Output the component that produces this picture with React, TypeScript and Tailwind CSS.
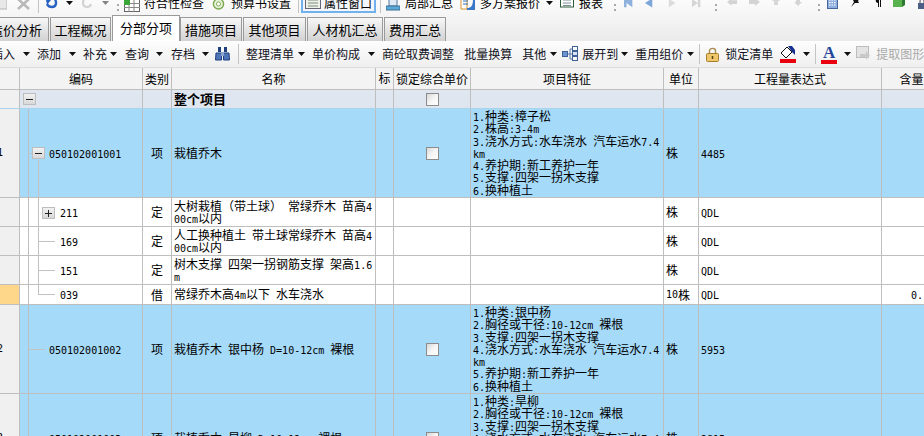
import React from "react";

const cjk = "font-['Noto_Sans_CJK_SC','Liberation_Sans',sans-serif]";
const mono = "font-['DejaVu_Sans_Mono','Liberation_Mono',monospace] text-[10px]";

function Mixed({ t }: { t: string }) {
  const parts = t.match(/[\x00-\x7f]+|[^\x00-\x7f]+/g) || [];
  return (
    <>
      {parts.map((p, i) =>
        /^[\x00-\x7f]/.test(p) ? (
          <span key={i} className={`${mono} whitespace-pre`}>{p}</span>
        ) : (
          <span key={i}>{p}</span>
        )
      )}
    </>
  );
}

function Lines({ lines, cls }: { lines: string[]; cls: string }) {
  return (
    <div className={cls}>
      {lines.map((l, i) => (
        <div key={i} className="whitespace-pre h-[12.3px]"><Mixed t={l} /></div>
      ))}
    </div>
  );
}

const Arrow = ({ cls }: { cls: string }) => (
  <svg viewBox="0 0 7 4" className={`w-[7px] h-[4px] shrink-0 ${cls}`}><path d="M0 0H7L3.5 4Z" fill="#111" /></svg>
);
const Grip = ({ cls }: { cls: string }) => (
  <div className={`w-[2px] h-[14px] shrink-0 flex flex-col justify-center gap-[3px] ${cls}`}>
    <div className="w-[2px] h-[2px] bg-[#a8a8a8]" />
    <div className="w-[2px] h-[2px] bg-[#a8a8a8]" />
  </div>
);
const Sep = ({ cls }: { cls: string }) => <div className={`w-px h-[20px] shrink-0 bg-[#c4c4c4] ${cls}`} />;
const Txt = ({ cls, children }: { cls: string; children: React.ReactNode }) => (
  <span className={`shrink-0 whitespace-nowrap ${cls}`}>{children}</span>
);

function NavIcon({ cls, d, fill }: { cls: string; d: string; fill: string }) {
  return (
    <svg viewBox="0 -7 12 20" className={`h-[20px] shrink-0 ${cls}`}><path d={d} fill={fill} /></svg>
  );
}

function TopBar() {
  return (
    <div className="h-[13px] overflow-hidden">
      <div className={`flex items-center h-[20px] -mt-[7px] text-[12px] text-black ${cjk}`}>
        <svg viewBox="0 -7 10 20" className="w-[10px] h-[20px] -ml-[3px] shrink-0"><rect x="1" y="-5" width="9" height="14" fill="#e8e8e8" stroke="#b5b5b5" /></svg>
        <svg viewBox="0 -7 13 20" className="w-[13px] h-[20px] ml-[10px] shrink-0"><path d="M1 -1L12 9M12 -1L1 9" stroke="#b9b9b9" strokeWidth="2.6" /></svg>
        <Sep cls="ml-[8px]" />
        <svg viewBox="0 -7 12 20" className="w-[12px] h-[20px] ml-[7px] shrink-0"><path d="M9 -1C11 3 10 7 6 7 3.500 7 2 6 1 4" stroke="#2a62c4" strokeWidth="2.4" fill="none" /><path d="M0 0H5L1 5Z" fill="#2a62c4" /></svg>
        <Arrow cls="ml-[8px]" />
        <svg viewBox="0 -7 10 20" className="w-[10px] h-[20px] ml-[9px] shrink-0"><path d="M2 -1C0 3 1 7 5 7 7 7 8.500 6 9 4" stroke="#d2d2d2" strokeWidth="2.2" fill="none" /></svg>
        <Arrow cls="ml-[10px] opacity-50" />
        <Grip cls="ml-[8px] mt-[8px]" />
        <svg viewBox="0 -7 16 20" className="w-[16px] h-[20px] ml-[5px] shrink-0">
          <rect x="0.500" y="-0.500" width="15" height="12" fill="#fff" stroke="#666" />
          <path d="M0 3.500H16M0 7.500H16M5 0V12M10 0V12" stroke="#888" />
          <rect x="0" y="-1" width="6" height="6" fill="#3aa63a" />
        </svg>
        <Txt cls="ml-[4px]">符合性检查</Txt>
        <svg viewBox="0 -7 14 20" className="w-[13px] h-[20px] ml-[8px] shrink-0">
          <circle cx="7" cy="4" r="5.500" fill="#e6f2d8" stroke="#7aa84e" strokeWidth="1.500" />
          <circle cx="7" cy="4" r="2.200" fill="#fff" stroke="#7aa84e" />
        </svg>
        <Txt cls="ml-[6px]">预算书设置</Txt>
        <Sep cls="ml-[7px]" />
        <div className="ml-[2px] w-[75px] h-[20px] shrink-0 flex items-center border-2 border-[#72b2ec] bg-[#f3f6fb] pl-[2px]">
          <svg viewBox="0 -7 16 20" className="w-[16px] h-[20px] shrink-0">
            <rect x="0.500" y="-2.500" width="15" height="11" fill="#eef1e8" stroke="#667" />
            <path d="M3 0H13M3 3H13M3 6H13" stroke="#7a8a80" />
          </svg>
          <Txt cls="ml-[3px]">属性窗口</Txt>
        </div>
        <Sep cls="ml-[4px]" />
        <svg viewBox="0 -7 14 20" className="w-[14px] h-[20px] ml-[5px] shrink-0">
          <rect x="3" y="-2" width="8" height="8" fill="#dfe9f5" stroke="#55789f" />
          <path d="M0 6H14V10H0Z" fill="#5aa9d6" stroke="#3c6f96" />
        </svg>
        <Txt cls="ml-[5px]">局部汇总</Txt>
        <svg viewBox="0 -7 8 20" className="w-[8px] h-[20px] ml-[7px] shrink-0">
          <path d="M1 -2H7V9H1Z" fill="#fff" stroke="#d9912b" />
          <path d="M3 1H8M3 4H8" stroke="#2d6fbe" />
        </svg>
        <svg viewBox="0 -7 8 20" className="w-[8px] h-[20px] -ml-px shrink-0"><path d="M0 8C5 8 6 5 6 -2H8V10H0Z" fill="#3a78c8" /></svg>
        <Txt cls="ml-[5px]">多方案报价</Txt>
        <Arrow cls="ml-[6px]" />
        <svg viewBox="0 -7 14 20" className="w-[14px] h-[20px] ml-[7px] shrink-0">
          <rect x="0.500" y="-2" width="13" height="9" fill="#fff" stroke="#2e5c3a" />
          <path d="M3 0H11M3 3H11M3 5.500H11" stroke="#7d8e96" />
        </svg>
        <Txt cls="ml-[5px]">报表</Txt>
        <Grip cls="ml-[11px] mt-[8px]" />
        <NavIcon cls="w-[10px] ml-[8px]" d="M0 -2H3V8H0ZM3 -2L10 -2 10 8 3 3Z" fill="#8fb2dd" />
        <NavIcon cls="w-[11px] ml-[10px]" d="M9 -2V8L1 3Z" fill="#7ea7d9" />
        <NavIcon cls="w-[10px] ml-[13px]" d="M1 -2V8L9 3Z" fill="#dcdcdc" />
        <NavIcon cls="w-[10px] ml-[14px]" d="M0 -2V8L7 3ZM7 -2H10V8H7Z" fill="#d6d6d6" />
        <Grip cls="ml-[13px] mt-[8px]" />
        <NavIcon cls="w-[11px] ml-[10px]" d="M0 2L5 -2V0H11V4H5V6Z" fill="#d4d4d4" />
        <NavIcon cls="w-[12px] ml-[10px]" d="M12 2L7 -2V0H1V4H7V6Z" fill="#d4d4d4" />
        <NavIcon cls="w-[12px] ml-[10px]" d="M6 -3L10 1H8V5H4V1H2Z" fill="#d8d8d8" />
        <NavIcon cls="w-[12px] ml-[10px]" d="M6 6L10 2H8V-2H4V2H2Z" fill="#d4d4d4" />
        <Grip cls="ml-[14px] mt-[8px]" />
        <svg viewBox="0 -7 11 20" className="w-[11px] h-[20px] ml-[7px] shrink-0">
          <rect x="0.500" y="-2.500" width="10" height="11" fill="#8fb0de" stroke="#44689c" />
          <path d="M2 0H9M2 2.500H9M2 5H9" stroke="#fff" strokeDasharray="1.500 1" />
        </svg>
        <svg viewBox="0 -7 10 20" className="w-[10px] h-[20px] ml-[12px] shrink-0">
          <path d="M1 7L4 2 3 0 6 -2H10L8 1 9 3 5 3Z" fill="#111" />
        </svg>
        <svg viewBox="0 -7 7 20" className="w-[7px] h-[20px] ml-[15px] shrink-0">
          <path d="M3 -2H7V-1H6V7H5V-1H4V7H3V3C0 3 0 -2 3 -2Z" fill="#111" />
        </svg>
        <svg viewBox="0 -7 12 20" className="w-[12px] h-[20px] ml-[11px] shrink-0">
          <path d="M0 -3H9V7H0Z" fill="#58b24d" />
          <path d="M9 -3H12V5L9 7Z" fill="#2f7a32" />
        </svg>
        <svg viewBox="0 -7 10 20" className="w-[10px] h-[20px] ml-[12px] shrink-0">
          <path d="M3 3V1C3 -1 7 -1 7 1V3" stroke="#445" fill="none" />
          <rect x="1" y="3" width="8" height="6" fill="#4e5f85" />
        </svg>
      </div>
    </div>
  );
}

function Tab({ cls, label }: { cls: string; label: string }) {
  return (
    <div className={`h-[24px] shrink-0 flex items-center justify-center border border-b-0 border-[#9a9a9a] bg-gradient-to-b from-[#f7f7f7] to-[#d2d2d2] text-[13px] tracking-[0px] text-black ${cls}`}>
      {label}
    </div>
  );
}

function Tabs() {
  return (
    <div className={`flex items-end h-[26px] mt-[2px] ${cjk} whitespace-nowrap`}>
      <Tab cls="w-[50px] -ml-px justify-end pr-[6px] overflow-hidden" label="造价分析" />
      <Tab cls="w-[61px] ml-[1px]" label="工程概况" />
      <div className="h-[26px] w-[68px] ml-[1px] shrink-0 flex items-center justify-center border border-b-0 border-[#9a9a9a] bg-white text-[13px] text-black pb-[2px]">分部分项</div>
      <Tab cls="w-[62px] ml-0" label="措施项目" />
      <Tab cls="w-[63px] ml-[1px]" label="其他项目" />
      <Tab cls="w-[76px] ml-[1px]" label="人材机汇总" />
      <Tab cls="w-[62px] ml-[1px]" label="费用汇总" />
    </div>
  );
}

function Toolbar2() {
  return (
    <div className={`h-[27px] flex items-center overflow-hidden bg-gradient-to-b from-[#fdfdfd] to-[#efefef] text-[12px] text-[#111122] ${cjk} border-b border-[#dcdcdc]`}>
      <Txt cls="-ml-[9px]">插入</Txt>
      <Arrow cls="ml-[8px]" />
      <Txt cls="ml-[7px]">添加</Txt>
      <Arrow cls="ml-[8px]" />
      <Txt cls="ml-[7px]">补充</Txt>
      <Arrow cls="ml-[3px]" />
      <Txt cls="ml-[8px]">查询</Txt>
      <Arrow cls="ml-[7px]" />
      <Txt cls="ml-[8px]">存档</Txt>
      <Arrow cls="ml-[7px]" />
      <svg viewBox="0 0 15 14" className="w-[15px] h-[14px] ml-[6px] shrink-0">
        <path d="M3 0H6V5H3ZM9 0H12V5H9Z" fill="#1f3f7f" />
        <path d="M1 6H6.500V13H0.500ZM8.500 6H14L14.500 13H8.500Z" fill="#4f74b8" stroke="#1f3f7f" />
        <rect x="6" y="5" width="3" height="4" fill="#8aa3cc" />
      </svg>
      <Sep cls="ml-[8px]" />
      <Txt cls="ml-[7px]">整理清单</Txt>
      <Arrow cls="ml-[4px]" />
      <Txt cls="ml-[7px]">单价构成</Txt>
      <Arrow cls="ml-[8px]" />
      <Txt cls="ml-[7px]">商砼取费调整</Txt>
      <Txt cls="ml-[10px]">批量换算</Txt>
      <Txt cls="ml-[10px]">其他</Txt>
      <Arrow cls="ml-[4px]" />
      <svg viewBox="0 0 16 16" className="w-[16px] h-[16px] ml-[5px] shrink-0">
        <path d="M5 8H10M8 3V13H10M8 3H10" stroke="#5878a8" fill="none" />
        <rect x="0.500" y="5.500" width="5" height="5" fill="#6b94d0" stroke="#3f6296" />
        <rect x="10.500" y="0.500" width="5" height="4" fill="#fff" stroke="#3f6296" />
        <rect x="10.500" y="5.500" width="5" height="4" fill="#d9e6f7" stroke="#3f6296" />
        <rect x="10.500" y="10.500" width="5" height="4" fill="#fff" stroke="#3f6296" />
      </svg>
      <Txt cls="ml-[4px]">展开到</Txt>
      <Arrow cls="ml-[3px]" />
      <Txt cls="ml-[7px]">重用组价</Txt>
      <Arrow cls="ml-[4px]" />
      <Sep cls="ml-[5px]" />
      <svg viewBox="0 0 13 15" className="w-[13px] h-[15px] ml-[6px] shrink-0">
        <path d="M3.500 7V4C3.500 0.500 9.500 0.500 9.500 4V7" stroke="#a98b54" strokeWidth="1.400" fill="none" />
        <rect x="0.500" y="6.500" width="12" height="8" rx="1" fill="#eec76a" stroke="#a67e2e" />
        <path d="M6.500 9V12" stroke="#5c4316" strokeWidth="1.500" />
      </svg>
      <Txt cls="ml-[6px]">锁定清单</Txt>
      <div className="ml-[7px] w-[16px] h-[17px] shrink-0 flex flex-col justify-between">
        <svg viewBox="0 0 16 13" className="w-[16px] h-[13px]">
          <path d="M1 7L7 1 12 6 6 12Z" fill="#fff" stroke="#111" />
          <path d="M8 0H12L15 4V9L12 6Z" fill="#17308f" />
        </svg>
        <div className="h-[4px] bg-[#e8000f]" />
      </div>
      <Arrow cls="ml-[7px]" />
      <Sep cls="ml-[5px]" />
      <div className="ml-[5px] w-[16px] h-[19px] shrink-0 flex flex-col items-center justify-between">
        <span className="font-['Liberation_Serif',serif] font-bold text-[17px] leading-[15px] text-[#25479a]">A</span>
        <div className="w-[16px] h-[4px] bg-[#e8000f]" />
      </div>
      <Arrow cls="ml-[7px]" />
      <svg viewBox="0 0 14 16" className="w-[14px] h-[16px] ml-[5px] shrink-0">
        <rect x="0.500" y="0.500" width="12" height="11" fill="#e4e4e4" stroke="#bdbdbd" />
        <path d="M4 8H10V5L14 9.500 10 14V11H4Z" fill="#c9c9c9" />
      </svg>
      <Txt cls="ml-[6px] text-[#a9a9a9]">提取图形</Txt>
    </div>
  );
}

const grid = "grid grid-cols-[20px_9px_114px_29px_204px_18px_77px_193px_35px_183px_60px] border-b border-[#bebebe]";
const c = "border-r border-[#bebebe] flex items-center min-w-0 overflow-hidden";

function Check() {
  return (
    <div className="w-[13px] h-[13px] border border-[#8c8c8c] bg-gradient-to-br from-[#d8d8d8] via-[#f5f5f5] to-white" />
  );
}

function Box({ cls, plus }: { cls: string; plus?: boolean }) {
  return (
    <div className={`absolute w-[13px] h-[12px] border border-[#bdbdbd] bg-gradient-to-b from-[#f2f2f2] to-[#d9d9d9] flex items-center justify-center ${cls}`}>
      <div className="relative w-[7px] h-px bg-[#222]">
        {plus && <div className="absolute left-[3px] -top-[3px] w-px h-[7px] bg-[#222]" />}
      </div>
    </div>
  );
}

type RowProps = {
  h: string; bg: string; hdr?: string; num?: string; code: React.ReactNode; kind: string;
  name: string[]; check?: boolean; feat?: string[]; unit: string; qty: string; amount?: string;
};

function Row({ h, bg, hdr, num, code, kind, name, check, feat, unit, qty, amount }: RowProps) {
  return (
    <div className={`${grid} ${h} ${bg}`}>
      <div className={`${c} ${hdr || "bg-[#f0f0f0]"}`}>
        {num && <span className={`-ml-[3px] ${mono}`}>{num}</span>}
      </div>
      <div className={c} />
      <div className={`${c} relative overflow-visible pt-[3px] ${mono}`}>{code}</div>
      <div className={`${c} justify-center`}>{kind}</div>
      <div className={c}><Lines lines={name} cls="pl-[2px]" /></div>
      <div className={c} />
      <div className={`${c} justify-center`}>{check && <Check />}</div>
      <div className={c}>{feat && <Lines lines={feat} cls="pl-[2px]" />}</div>
      <div className={`${c} pl-[2px]`}><Mixed t={unit} /></div>
      <div className={`${c} pl-[2px] pt-[3px] ${mono}`}>{qty}</div>
      <div className={`${c} pl-[29px] pt-[3px] ${mono}`}>{amount}</div>
    </div>
  );
}

const Head = ({ cls, children }: { cls?: string; children?: React.ReactNode }) => (
  <div className={`border-r border-[#bebebe] flex items-center justify-center overflow-hidden whitespace-nowrap ${cls || ""}`}>{children}</div>
);

const Stub = ({ w }: { w: string }) => <div className={`absolute h-px bg-[#c2c2c2] ${w}`} />;

function Table() {
  return (
    <div className={`relative text-[12px] leading-[12px] text-black ${cjk}`}>
      <div className="grid grid-cols-[20px_9px_114px_29px_204px_18px_77px_193px_35px_183px_60px] border-b border-[#bebebe] h-[22px] bg-[#f3f3f3]">
        <Head />
        <Head cls="col-span-2">编码</Head>
        <Head>类别</Head>
        <Head>名称</Head>
        <Head cls="pb-[2px]">标</Head>
        <Head>锁定综合单价</Head>
        <Head>项目特征</Head>
        <Head>单位</Head>
        <Head>工程量表达式</Head>
        <Head>含量</Head>
      </div>
      <div className="grid grid-cols-[20px_9px_114px_29px_204px_18px_77px_193px_35px_183px_60px] border-b border-[#a9d4ee] h-[19px] bg-[#dfe6f0]">
        <div className={`${c} bg-[#f0f0f0]`} />
        <div className={`${c} col-span-2 relative overflow-visible`}><Box cls="left-[3px] top-[3px]" /></div>
        <div className={c} />
        <div className={`${c} pl-[2px] font-bold text-[13px]`}>整个项目</div>
        <div className={c} />
        <div className={`${c} justify-center`}><Check /></div>
        <div className={c} />
        <div className={c} />
        <div className={c} />
        <div className={c} />
      </div>
      <Row h="h-[89px]" bg="bg-[#a6daf9]" num="1" kind="项" check unit="株" qty="4485" name={["栽植乔木"]}
        code={<><Box cls="left-[3px] top-[38px]" /><Stub w="-left-[1px] w-[4px] top-[44px]" /><span className="pl-[20px]">050102001001</span></>}
        feat={["1.种类:樟子松", "2.株高:3-4m", "3.浇水方式:水车浇水 汽车运水7.4", "km", "4.养护期:新工养护一年", "5.支撑:四架一拐木支撑", "6.换种植土"]} />
      <Row h="h-[29px]" bg="bg-white" kind="定" unit="株" qty="QDL" name={["大树栽植（带土球） 常绿乔木 苗高4", "00cm以内"]}
        code={<><Box cls="left-[13px] top-[9px]" plus /><span className="pl-[31px]">211</span></>} />
      <Row h="h-[29px]" bg="bg-white" kind="定" unit="株" qty="QDL" name={["人工换种植土 带土球常绿乔木 苗高4", "00cm以内"]}
        code={<><Stub w="left-[10px] w-[16px] top-[14px]" /><span className="pl-[31px]">169</span></>} />
      <Row h="h-[29px]" bg="bg-white" kind="定" unit="株" qty="QDL" name={["树木支撑 四架一拐钢筋支撑 架高1.6", "m"]}
        code={<><Stub w="left-[10px] w-[16px] top-[14px]" /><span className="pl-[31px]">151</span></>} />
      <Row h="h-[20px]" bg="bg-white" hdr="bg-[#ffd78b]" kind="借" unit="10株" qty="QDL" amount="0." name={["常绿乔木高4m以下 水车浇水"]}
        code={<><Stub w="left-[10px] w-[16px] top-[9px]" /><span className="pl-[31px]">039</span></>} />
      <Row h="h-[89px]" bg="bg-[#a6daf9]" num="2" kind="项" check unit="株" qty="5953" name={["栽植乔木 银中杨 D=10-12cm 裸根"]}
        code={<><Stub w="-left-[1px] w-[17px] top-[44px]" /><span className="pl-[20px]">050102001002</span></>}
        feat={["1.种类:银中杨", "2.胸径或干径:10-12cm 裸根", "3.支撑:四架一拐木支撑", "4.浇水方式:水车浇水 汽车运水7.4", "km", "5.养护期:新工养护一年", "6.换种植土"]} />
      <Row h="h-[89px]" bg="bg-[#a6daf9]" num="3" kind="项" check unit="株" qty="2815" name={["栽植乔木 旱柳 D=10-12cm 裸根"]}
        code={<><Stub w="-left-[1px] w-[17px] top-[44px]" /><span className="pl-[20px]">050102001003</span></>}
        feat={["1.种类:旱柳", "2.胸径或干径:10-12cm 裸根", "3.支撑:四架一拐木支撑", "4.浇水方式:水车浇水 汽车运水7.4", "km", "5.养护期:新工养护一年", "6.换种植土"]} />
      <div className="absolute left-[38px] top-[92px] w-px h-[135px] bg-[#c2c2c2]" />
    </div>
  );
}

export default function App() {
  return (
    <div className="w-[924px] h-[436px] overflow-hidden bg-white">
      <div className="h-[41px] bg-gradient-to-b from-[#fbfbfb] to-[#ebebeb] overflow-hidden">
        <TopBar />
        <Tabs />
      </div>
      <Toolbar2 />
      <Table />
    </div>
  );
}
